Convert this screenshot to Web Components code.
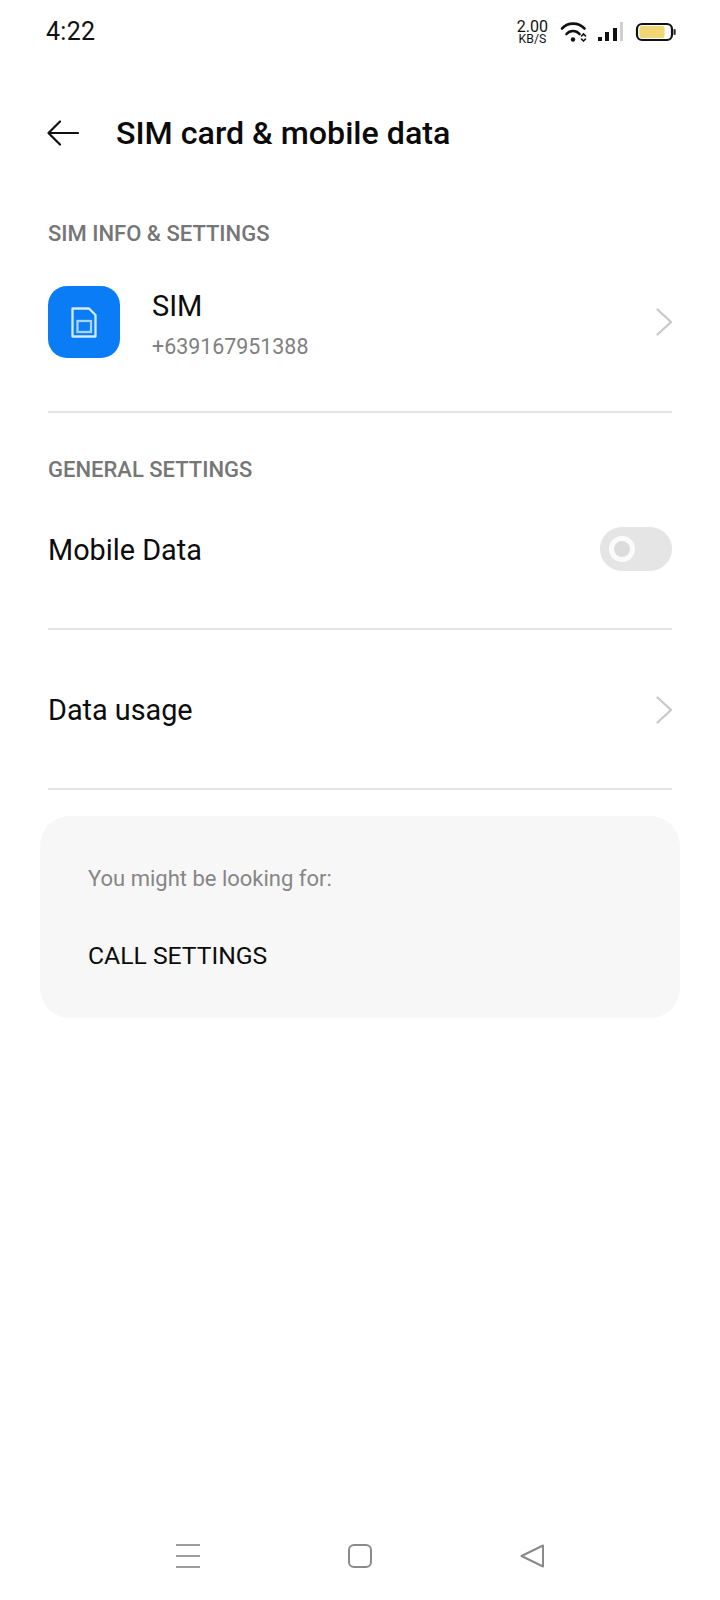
<!DOCTYPE html>
<html>
<head>
<meta charset="utf-8">
<style>
    html, body { margin: 0; padding: 0; background: #fff; }
    body { width: 720px; height: 1600px; font-family: Roboto, sans-serif; color: #0c0c0c; display: flex; flex-direction: column; }
    main-list { flex: 1; }
</style>
</head>
<body>
<status-bar></status-bar>
<title-bar>SIM card &amp; mobile data</title-bar>
<main-list>
    <section-label style="--top: 17px">SIM INFO &amp; SETTINGS</section-label>
    <sim-row name="SIM" number="+639167951388"></sim-row>
    <section-label style="--top: 44px">GENERAL SETTINGS</section-label>
    <setting-row style="--h: 147px; --pad: 0 0 12px">Mobile Data<off-switch slot="end"></off-switch></setting-row>
    <setting-row style="--h: 160px; --pad: 2px 0 0">Data usage<chev-right slot="end"></chev-right></setting-row>
    <suggest-card heading="You might be looking for:">CALL SETTINGS</suggest-card>
</main-list>
<nav-bar></nav-bar>

<script>
class StatusBar extends HTMLElement {
    connectedCallback() {
        const shadow = this.attachShadow({ mode: 'open' })
        shadow.innerHTML = `
        <style>
            :host {
                display: flex;
                align-items: center;
                height: 62px;
                padding: 0 44px 0 46px;
                color: #111;
            }
            .time { font-size: 25px; flex: 1; letter-spacing: 0.3px; }
            .speed { display: flex; flex-direction: column; align-items: center; margin: 2px 12px 0 0; }
            .speed b { font-size: 16px; font-weight: 400; line-height: 14px; }
            .speed i { font-style: normal; font-size: 12.3px; line-height: 10px; }
            svg { display: block; }
        </style>
        <span class="time">4:22</span>
        <span class="speed"><b>2.00</b><i>KB/S</i></span>
        <svg width="28" height="22" viewBox="0 0 28 22" fill="none" stroke="#111" stroke-width="2.6" stroke-linecap="round">
            <path d="M2 8.5C8 2 18 2 24.5 8.5"/>
            <path d="M6.5 14C10 10 16 10 19.5 14"/>
            <circle cx="13" cy="19.5" r="2.2" fill="#111" stroke="none"/>
            <path d="M21.5 16l2-2 2 2M21.5 19l2 2 2-2" stroke-width="1.6"/>
        </svg>
        <svg style="margin-left:8px" width="27" height="22" viewBox="0 0 27 22">
            <rect x="2" y="17" width="4" height="4" fill="#111"/>
            <rect x="9" y="12" width="4" height="9" fill="#111"/>
            <rect x="17" y="8" width="4" height="13" fill="#111"/>
            <rect x="24" y="2" width="3" height="19" fill="#cfcfcf"/>
        </svg>
        <svg style="margin-left:12px" width="41" height="22" viewBox="0 0 41 22">
            <rect x="2" y="4" width="35" height="16" rx="5" fill="#fff" stroke="#111" stroke-width="2.2"/>
            <rect x="4.5" y="6" width="25" height="12" rx="2" fill="#f0d674"/>
            <rect x="38.5" y="9" width="2.2" height="6" rx="1" fill="#333"/>
        </svg>
        `
    }
}
customElements.define('status-bar', StatusBar)

class TitleBar extends HTMLElement {
    connectedCallback() {
        const shadow = this.attachShadow({ mode: 'open' })
        shadow.innerHTML = `
        <style>
            :host {
                display: flex;
                align-items: center;
                height: 142px;
                padding-left: 47px;
            }
            svg { display: block; margin-right: 37px; }
            h1 { margin: 0; font-size: 32.2px; font-weight: 500; color: #0a0a0a; }
        </style>
        <svg width="32" height="26" viewBox="0 0 32 26" fill="none" stroke="#111" stroke-width="2.2" stroke-linecap="round" stroke-linejoin="round">
            <path d="M31 13H1.5M13 1.5L1.5 13L13 24.5"/>
        </svg>
        <h1><slot></slot></h1>
        `
    }
}
customElements.define('title-bar', TitleBar)

class SectionLabel extends HTMLElement {
    connectedCallback() {
        const shadow = this.attachShadow({ mode: 'open' })
        shadow.innerHTML = `
        <style>
            :host {
                display: block;
                margin: var(--top, 0) 48px 0;
                font-size: 22px;
                line-height: 26px;
                font-weight: 500;
                color: #767676;
            }
        </style>
        <slot></slot>
        `
    }
}
customElements.define('section-label', SectionLabel)

class ChevRight extends HTMLElement {
    connectedCallback() {
        const shadow = this.attachShadow({ mode: 'open' })
        shadow.innerHTML = `
        <style>
            :host { display: block; }
            svg { display: block; }
        </style>
        <svg width="16" height="28" viewBox="0 0 16 28" fill="none" stroke="#c8c8c8" stroke-width="2.2" stroke-linecap="round" stroke-linejoin="round">
            <path d="M1.5 1.5L15 14L1.5 26.5"/>
        </svg>
        `
    }
}
customElements.define('chev-right', ChevRight)

class SimRow extends HTMLElement {
    connectedCallback() {
        const shadow = this.attachShadow({ mode: 'open' })
        shadow.innerHTML = `
        <style>
            :host {
                display: flex;
                align-items: flex-start;
                margin: 0 48px;
                padding-top: 39px;
                height: 125px;
                border-bottom: 2px solid #e4e4e4;
            }
            .icon {
                width: 72px;
                height: 72px;
                border-radius: 19px;
                background: #0a7cf6;
                display: flex;
                align-items: center;
                justify-content: center;
                margin-right: 32px;
            }
            .text { flex: 1; margin-top: 2px; }
            .name { font-size: 29px; line-height: 36px; }
            .num { font-size: 21.4px; line-height: 28px; margin-top: 9px; color: #808080; }
            chev-right { margin-top: 22px; }
        </style>
        <div class="icon">
            <svg width="26" height="31" viewBox="0 0 26 31" fill="none" stroke="#d4eaff" stroke-width="2.3">
                <path d="M1.5 1.5H18L24.5 8V29.5H1.5Z" stroke-linejoin="round"/>
                <rect x="6.5" y="14" width="13.5" height="11" stroke="#a8d4ff"/>
            </svg>
        </div>
        <div class="text">
            <div class="name">${this.getAttribute('name')}</div>
            <div class="num">${this.getAttribute('number')}</div>
        </div>
        <chev-right></chev-right>
        `
    }
}
customElements.define('sim-row', SimRow)

class OffSwitch extends HTMLElement {
    connectedCallback() {
        const shadow = this.attachShadow({ mode: 'open' })
        shadow.innerHTML = `
        <style>
            :host {
                display: flex;
                align-items: center;
                width: 72px;
                height: 44px;
                margin-bottom: 2px;
                padding-left: 9px;
                box-sizing: border-box;
                border-radius: 22px;
                background: #e5e5e5;
            }
            span {
                width: 26px;
                height: 26px;
                box-sizing: border-box;
                border-radius: 50%;
                border: 5px solid #fbfbfb;
                background: #dcdcdc;
            }
        </style>
        <span></span>
        `
    }
}
customElements.define('off-switch', OffSwitch)

class SettingRow extends HTMLElement {
    connectedCallback() {
        const shadow = this.attachShadow({ mode: 'open' })
        shadow.innerHTML = `
        <style>
            :host {
                display: flex;
                align-items: center;
                justify-content: space-between;
                margin: 0 48px;
                height: var(--h, 158px);
                padding: var(--pad, 0);
                box-sizing: border-box;
                border-bottom: 2px solid #e4e4e4;
                font-size: 28.8px;
            }
        </style>
        <slot></slot>
        <slot name="end"></slot>
        `
    }
}
customElements.define('setting-row', SettingRow)

class SuggestCard extends HTMLElement {
    connectedCallback() {
        const shadow = this.attachShadow({ mode: 'open' })
        shadow.innerHTML = `
        <style>
            :host {
                display: block;
                margin: 26px 40px 0;
                height: 202px;
                box-sizing: border-box;
                padding: 49px 48px 0;
                border-radius: 30px;
                background: #f7f7f7;
            }
            .head { font-size: 22px; line-height: 28px; color: #868686; }
            .link { font-size: 24.7px; line-height: 32px; margin-top: 47px; color: #0c0c0c; }
        </style>
        <div class="head">${this.getAttribute('heading')}</div>
        <div class="link"><slot></slot></div>
        `
    }
}
customElements.define('suggest-card', SuggestCard)

class NavBar extends HTMLElement {
    connectedCallback() {
        const shadow = this.attachShadow({ mode: 'open' })
        shadow.innerHTML = `
        <style>
            :host {
                display: flex;
                justify-content: space-between;
                align-items: center;
                height: 94px;
                padding: 5px 176px 0;
                box-sizing: border-box;
            }
            svg { display: block; }
        </style>
        <svg width="24" height="24" viewBox="0 0 24 24" fill="none" stroke="#9e9e9e" stroke-width="2">
            <path d="M0 1H24M0 12H24M0 23H24"/>
        </svg>
        <svg width="24" height="24" viewBox="0 0 24 24" fill="none" stroke="#8a8a8a" stroke-width="2">
            <rect x="1" y="1" width="22" height="22" rx="5"/>
        </svg>
        <svg width="24" height="24" viewBox="0 0 24 24" fill="none" stroke="#8a8a8a" stroke-width="2" stroke-linejoin="round">
            <path d="M1.5 12L23 1.5V22.5Z"/>
        </svg>
        `
    }
}
customElements.define('nav-bar', NavBar)
</script>
</body>
</html>
